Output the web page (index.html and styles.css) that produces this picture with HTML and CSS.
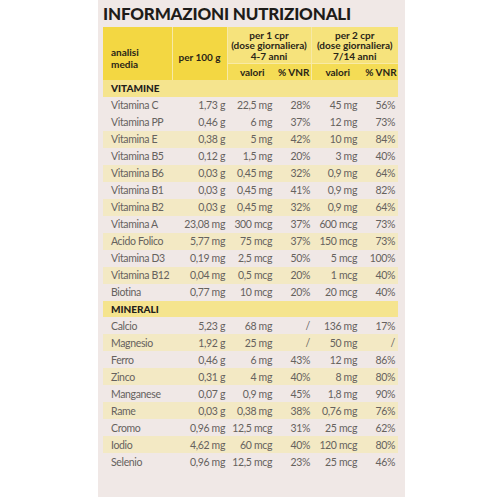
FILE: index.html
```html
<!DOCTYPE html>
<html lang="it">
<head>
  <meta charset="UTF-8">
  <title>Informazioni nutrizionali</title>
  <link rel="stylesheet" href="styles.css">
</head>
<body>

<div class="panel">
  <h1>INFORMAZIONI NUTRIZIONALI</h1>

  <table class="tab">
    <colgroup>
      <col class="c-name">
      <col class="c-100">
      <col class="c-v1">
      <col class="c-p1">
      <col class="c-v2">
      <col class="c-p2">
    </colgroup>
    <thead>
      <tr class="h-top">
        <th rowspan="2" class="h-name">analisi<br>media</th>
        <th rowspan="2" class="h-100">per 100 g</th>
        <th colspan="2" class="h-group">per 1 cpr<br>(dose giornaliera)<br>4-7 anni</th>
        <th colspan="2" class="h-group">per 2 cpr<br>(dose giornaliera)<br>7/14 anni</th>
      </tr>
      <tr class="h-sub">
        <th class="sub-v sep">valori</th>
        <th class="sub-p">% VNR</th>
        <th class="sub-v sep">valori</th>
        <th class="sub-p">% VNR</th>
      </tr>
    </thead>
    <tbody>
      <tr class="section"><td colspan="6">VITAMINE</td></tr>
      <tr><td>Vitamina C</td><td>1,73 g</td><td>22,5 mg</td><td>28%</td><td>45 mg</td><td>56%</td></tr>
      <tr><td>Vitamina PP</td><td>0,46 g</td><td>6 mg</td><td>37%</td><td>12 mg</td><td>73%</td></tr>
      <tr class="alt"><td>Vitamina E</td><td>0,38 g</td><td>5 mg</td><td>42%</td><td>10 mg</td><td>84%</td></tr>
      <tr><td>Vitamina B5</td><td>0,12 g</td><td>1,5 mg</td><td>20%</td><td>3 mg</td><td>40%</td></tr>
      <tr class="alt"><td>Vitamina B6</td><td>0,03 g</td><td>0,45 mg</td><td>32%</td><td>0,9 mg</td><td>64%</td></tr>
      <tr><td>Vitamina B1</td><td>0,03 g</td><td>0,45 mg</td><td>41%</td><td>0,9 mg</td><td>82%</td></tr>
      <tr class="alt"><td>Vitamina B2</td><td>0,03 g</td><td>0,45 mg</td><td>32%</td><td>0,9 mg</td><td>64%</td></tr>
      <tr><td>Vitamina A</td><td>23,08 mg</td><td>300 mcg</td><td>37%</td><td>600 mcg</td><td>73%</td></tr>
      <tr class="alt"><td>Acido Folico</td><td>5,77 mg</td><td>75 mcg</td><td>37%</td><td>150 mcg</td><td>73%</td></tr>
      <tr><td>Vitamina D3</td><td>0,19 mg</td><td>2,5 mcg</td><td>50%</td><td>5 mcg</td><td>100%</td></tr>
      <tr class="alt"><td>Vitamina B12</td><td>0,04 mg</td><td>0,5 mcg</td><td>20%</td><td>1 mcg</td><td>40%</td></tr>
      <tr><td>Biotina</td><td>0,77 mg</td><td>10 mcg</td><td>20%</td><td>20 mcg</td><td>40%</td></tr>

      <tr class="section"><td colspan="6">MINERALI</td></tr>
      <tr><td>Calcio</td><td>5,23 g</td><td>68 mg</td><td>/</td><td>136 mg</td><td>17%</td></tr>
      <tr class="alt"><td>Magnesio</td><td>1,92 g</td><td>25 mg</td><td>/</td><td>50 mg</td><td>/</td></tr>
      <tr><td>Ferro</td><td>0,46 g</td><td>6 mg</td><td>43%</td><td>12 mg</td><td>86%</td></tr>
      <tr class="alt"><td>Zinco</td><td>0,31 g</td><td>4 mg</td><td>40%</td><td>8 mg</td><td>80%</td></tr>
      <tr><td>Manganese</td><td>0,07 g</td><td>0,9 mg</td><td>45%</td><td>1,8 mg</td><td>90%</td></tr>
      <tr class="alt"><td>Rame</td><td>0,03 g</td><td>0,38 mg</td><td>38%</td><td>0,76 mg</td><td>76%</td></tr>
      <tr><td>Cromo</td><td>0,96 mg</td><td>12,5 mcg</td><td>31%</td><td>25 mcg</td><td>62%</td></tr>
      <tr class="alt"><td>Iodio</td><td>4,62 mg</td><td>60 mcg</td><td>40%</td><td>120 mcg</td><td>80%</td></tr>
      <tr><td>Selenio</td><td>0,96 mg</td><td>12,5 mcg</td><td>23%</td><td>25 mcg</td><td>46%</td></tr>
    </tbody>
  </table>
</div>

</body>
</html>
```

FILE: styles.css
```css
* {
  box-sizing: border-box;
  margin: 0;
  padding: 0;
}
body {
  background: #ffffff;
  font-family: Lato, "Open Sans", sans-serif;
}
.panel {
  margin-left: 98px;
  width: 307px;
  height: 497px;
  background: #f0e8e6;
  padding: 3px 7px 0 5px;
}
h1 {
  font-size: 17px;
  font-weight: 900;
  color: #1e1c19;
  height: 24px;
  line-height: 22px;
  letter-spacing: -0.2px;
}

/* tabella */
.tab {
  width: 295px;
  table-layout: fixed;
  border-collapse: collapse;
}
.c-name { width: 69px; }
.c-100 { width: 55px; }
.c-v1 { width: 50px; }
.c-p1 { width: 34px; }
.c-v2 { width: 53px; }
.c-p2 { width: 34px; }

.tab th {
  font-size: 10px;
  font-weight: 700;
  color: #2a2517;
  line-height: 10.5px;
}
.h-top th {
  height: 36px;
  background: #f3d742;
  text-align: center;
  border-left: 1.5px solid #f7e9a6;
}
.h-top .h-name {
  text-align: left;
  padding-left: 8px;
  border-left: none;
  padding-top: 8px;
  line-height: 12px;
}
.h-top .h-100 {
  padding-top: 8px;
}
.h-top .h-group {
  background: #f6e37c;
  border-bottom: 1px solid #f8eaa5;
  padding-top: 1px;
}
.h-sub th {
  height: 17px;
  background: #f4dc55;
  text-align: center;
}
.h-sub .sep {
  border-left: 1.5px solid #f7e9a6;
}

.tab td {
  height: 17px;
  font-size: 10.5px;
  font-weight: 400;
  color: #66625e;
  text-align: right;
  white-space: nowrap;
  letter-spacing: -0.35px;
}
.tab td:nth-child(1) { text-align: left; padding-left: 8px; }
.tab td:nth-child(2) { padding-right: 2px; }
.tab td:nth-child(3) { padding-right: 5px; }
.tab td:nth-child(4) { padding-right: 1px; }
.tab td:nth-child(5) { padding-right: 7px; }
.tab td:nth-child(6) { padding-right: 3px; }

.tab tr.alt td {
  background: #f3e9c4;
}
.tab tr.section td {
  height: 16.5px;
  background: #f5e48e;
  font-weight: 900;
  font-size: 10px;
  color: #22201a;
  text-align: left;
  padding-left: 8px;
  letter-spacing: 0;
}
```
